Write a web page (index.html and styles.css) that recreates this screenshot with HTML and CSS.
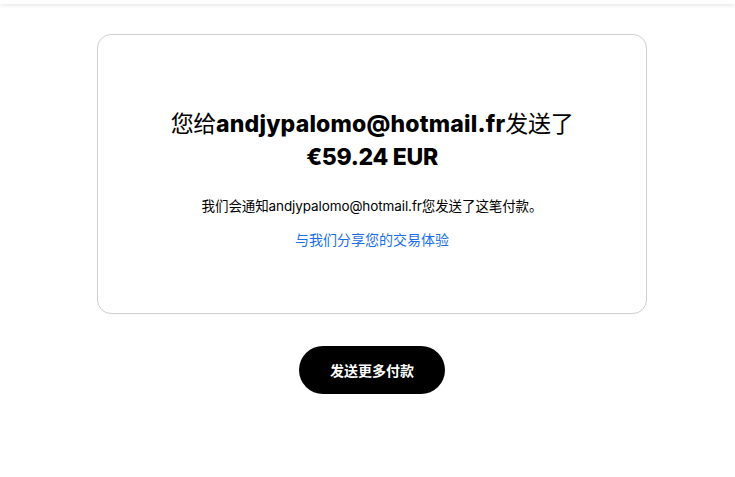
FILE: index.html
```html
<!DOCTYPE html>
<html lang="zh-CN">
<head>
    <meta charset="UTF-8">
    <meta name="viewport" content="width=device-width, initial-scale=1.0">
    <title>付款已发送</title>
    <link rel="stylesheet" href="styles.css">
</head>
<body>
    <div class="top-bar"></div>
    <main class="page">
        <div class="result-card">
            <h1 class="headline">
                您给<strong class="recipient">andjypalomo@hotmail.fr</strong>发送了<br>
                <strong>€59.24 EUR</strong>
            </h1>
            <p class="notice">我们会通知andjypalomo@hotmail.fr您发送了这笔付款。</p>
            <a class="feedback-link" href="#">与我们分享您的交易体验</a>
        </div>
        <button class="send-more" type="button">发送更多付款</button>
    </main>
</body>
</html>
```

FILE: styles.css
```css
body {
    margin: 0;
    background-color: white;
    font-family: Inter, "Noto Sans CJK SC", sans-serif;
    color: #000;
}
.top-bar {
    height: 4px;
    background-color: white;
    box-shadow: 0 1px 4px rgba(0,0,0,0.12);
}
.page {
    display: flex;
    flex-direction: column;
    align-items: center;
    padding-top: 30px;
    padding-left: 9px;
}
.result-card {
    box-sizing: border-box;
    width: 550px;
    height: 280px;
    border: 1px solid #cfcfcf;
    border-radius: 14px;
    display: flex;
    flex-direction: column;
    align-items: center;
    padding-top: 73px;
}
.headline {
    margin: 0;
    font-size: 23px;
    font-weight: 400;
    line-height: 33px;
    text-align: center;
    letter-spacing: -0.3px;
}
.headline strong {
    font-weight: 800;
}
.headline .recipient {
    letter-spacing: 0.2px;
}
.notice {
    margin: 23px 0 0;
    font-size: 13.5px;
    line-height: 18px;
    letter-spacing: -0.1px;
}
.feedback-link {
    margin-top: 16px;
    font-size: 14px;
    line-height: 18px;
    color: #1a6fe8;
    text-decoration: none;
}
.send-more {
    margin-top: 32px;
    width: 146px;
    height: 48px;
    border: none;
    border-radius: 24px;
    background-color: #000;
    color: white;
    font-family: Inter, "Noto Sans CJK SC", sans-serif;
    font-size: 14px;
    font-weight: 700;
    cursor: pointer;
}
```
